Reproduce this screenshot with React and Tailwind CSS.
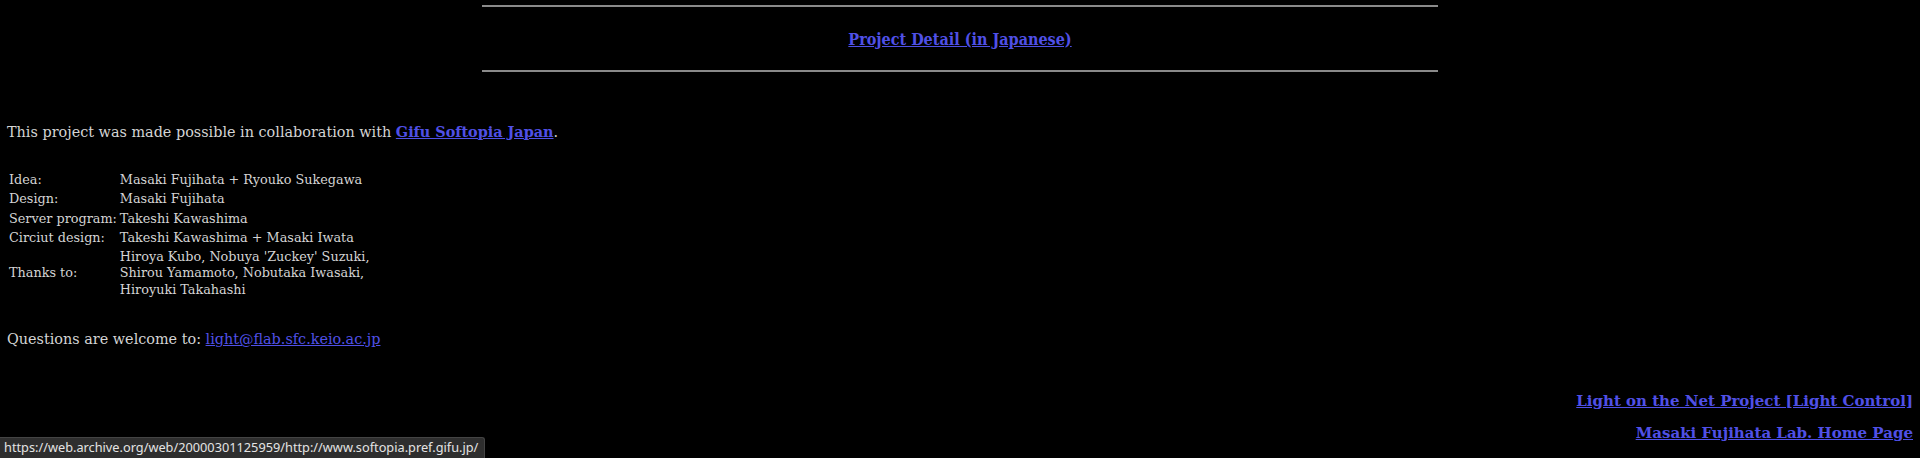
const serif = "font-['DejaVu_Serif','Liberation_Serif',serif]"

const credits = [
  ['Idea:', ['Masaki Fujihata + Ryouko Sukegawa']],
  ['Design:', ['Masaki Fujihata']],
  ['Server program:', ['Takeshi Kawashima']],
  ['Circiut design:', ['Takeshi Kawashima + Masaki Iwata']],
  ['Thanks to:', ["Hiroya Kubo, Nobuya 'Zuckey' Suzuki,", 'Shirou Yamamoto, Nobutaka Iwasaki,', 'Hiroyuki Takahashi']],
]

function Link({ children, bold = false, className = '' }) {
  return (
    <a href="#" className={`text-[#5050e6] underline ${bold ? 'font-bold' : ''} ${className}`}>
      {children}
    </a>
  )
}

export default function App() {
  return (
    <div className={`relative h-[458px] w-[1920px] overflow-hidden bg-black text-[#d4d4d4] ${serif}`}>
      <div className="pl-[7px] pr-[7px] pt-[5px]">
        <div className="mx-auto h-[2px] w-[956px] bg-[#8a8a8a]" />
        <div className="flex h-[63px] items-center justify-center pt-[2px]">
          <Link bold className="font-['DejaVu_Serif_Condensed','DejaVu_Serif',serif] text-[16px]">
            Project Detail (in Japanese)
          </Link>
        </div>
        <div className="mx-auto h-[2px] w-[956px] bg-[#8a8a8a]" />

        <p className="mt-[51px] text-[14.4px] leading-[18px]">
          This project was made possible in collaboration with <Link bold>Gifu Softopia Japan</Link>.
        </p>

        <table className="mt-[29px] border-separate border-spacing-[1px] text-[12.8px] leading-[16.3px]">
          <tbody>
            {credits.map(([label, lines]) => (
              <tr key={label}>
                <td className="whitespace-nowrap py-px pl-px pr-[2px] align-middle">{label}</td>
                <td className="py-px align-middle">
                  {lines.map((line) => (
                    <div key={line}>{line}</div>
                  ))}
                </td>
              </tr>
            ))}
          </tbody>
        </table>

        <p className="mt-[30px] text-[14.4px] leading-[18px]">
          Questions are welcome to: <Link>light@flab.sfc.keio.ac.jp</Link>
        </p>

        <div className="mt-[44px] flex flex-col items-end gap-[14px] text-[15px] leading-[18px]">
          <Link bold>Light on the Net Project [Light Control]</Link>
          <Link bold>Masaki Fujihata Lab. Home Page</Link>
        </div>
      </div>

      <div className="absolute bottom-0 left-0 flex h-[21px] items-center rounded-tr-[3px] border-t border-r border-[#444] bg-[#2e2e2e] pl-[4px] pr-[6px] font-['Noto_Sans',sans-serif] text-[12.75px] text-[#e4e4e4]">
        https://web.archive.org/web/20000301125959/http://www.softopia.pref.gifu.jp/
      </div>
    </div>
  )
}
